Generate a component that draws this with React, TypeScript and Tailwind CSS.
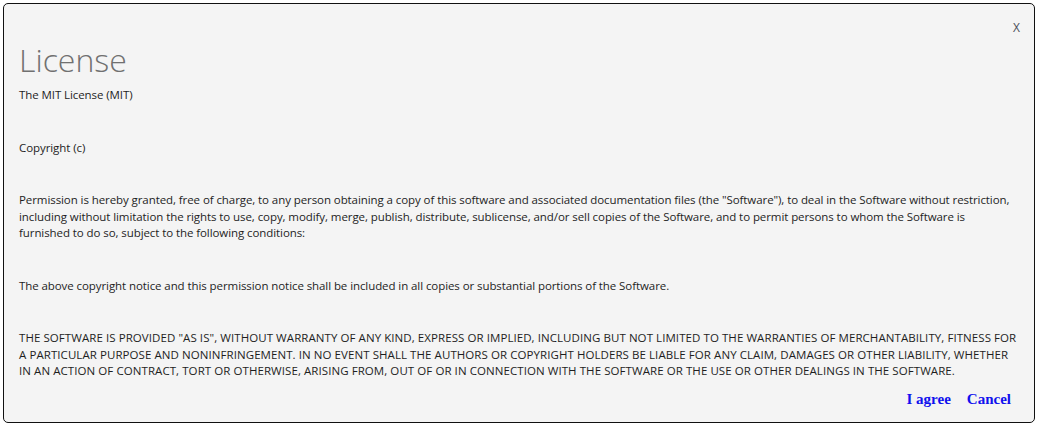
import React from 'react';

const body = { fontFamily: '"Open Sans", "Noto Sans", sans-serif' };

const permission = [
  'Permission is hereby granted, free of charge, to any person obtaining a copy of this software and associated documentation files (the "Software"), to deal in the Software without restriction,',
  'including without limitation the rights to use, copy, modify, merge, publish, distribute, sublicense, and/or sell copies of the Software, and to permit persons to whom the Software is',
  'furnished to do so, subject to the following conditions:',
];

const warranty = [
  'THE SOFTWARE IS PROVIDED "AS IS", WITHOUT WARRANTY OF ANY KIND, EXPRESS OR IMPLIED, INCLUDING BUT NOT LIMITED TO THE WARRANTIES OF MERCHANTABILITY, FITNESS FOR',
  'A PARTICULAR PURPOSE AND NONINFRINGEMENT. IN NO EVENT SHALL THE AUTHORS OR COPYRIGHT HOLDERS BE LIABLE FOR ANY CLAIM, DAMAGES OR OTHER LIABILITY, WHETHER',
  'IN AN ACTION OF CONTRACT, TORT OR OTHERWISE, ARISING FROM, OUT OF OR IN CONNECTION WITH THE SOFTWARE OR THE USE OR OTHER DEALINGS IN THE SOFTWARE.',
];

const Para = ({ lines, last }: { lines: string[]; last?: boolean }) => (
  <p className={last ? 'whitespace-nowrap tracking-[0.07px]' : 'mb-[36px] whitespace-nowrap'}>
    {lines.map((l, i) => (
      <span key={i} className="block">
        {l}
      </span>
    ))}
  </p>
);

export default function App() {
  return (
    <div className="w-[1038px] h-[426px] bg-white p-[3px]">
      <div
        className="relative h-[420px] w-[1032px] rounded-[5px] border border-[#111] bg-[#f4f4f4] text-[#1e1e1e]"
        style={body}
      >
        <button className="absolute right-[14px] top-[15px] text-[12px] text-[#4a4f5a]">X</button>
        <div className="flex h-full flex-col px-[15px] pt-[36px]">
          <h1 className="text-[32px] font-light leading-[40px] text-[#707070]">License</h1>
          <div className="mt-[7px] text-[11.5px] leading-[16.5px] tracking-[-0.08px]">
            <Para lines={['The MIT License (MIT)']} />
            <Para lines={['Copyright (c)']} />
            <Para lines={permission} />
            <Para lines={['The above copyright notice and this permission notice shall be included in all copies or substantial portions of the Software.']} />
            <Para lines={warranty} last />
          </div>
          <div
            className="mt-[8px] flex justify-end gap-[16px] pr-[8px] text-[15px] font-bold text-[#1010ee]"
            style={{ fontFamily: '"Liberation Serif", serif' }}
          >
            <button>I agree</button>
            <button>Cancel</button>
          </div>
        </div>
      </div>
    </div>
  );
}
